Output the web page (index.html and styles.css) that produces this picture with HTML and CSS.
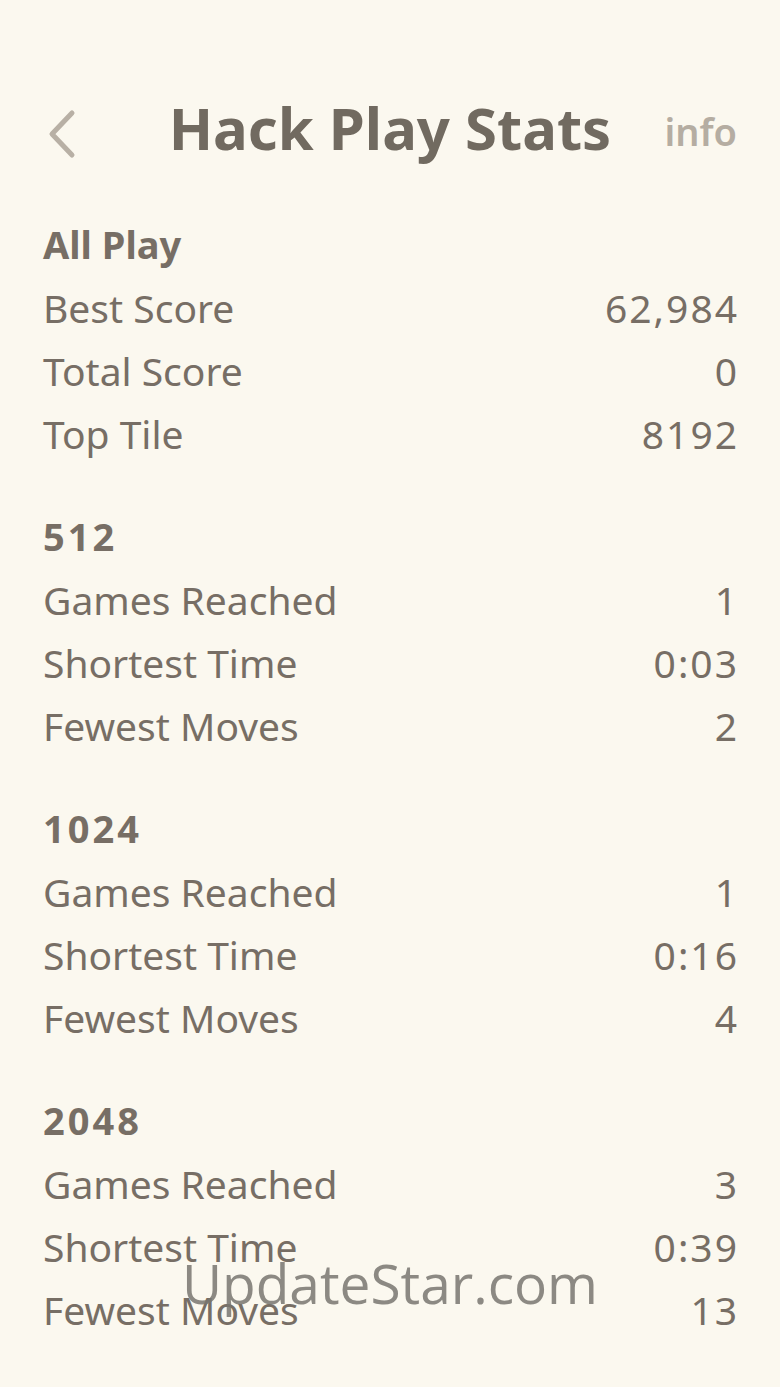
FILE: index.html
```html
<!DOCTYPE html>
<html>
<head>
<meta charset="utf-8">
<link rel="stylesheet" href="styles.css">
</head>
<body>
<div class="page">
  <header class="topbar">
    <div class="back">
      <svg width="40" height="60" viewBox="0 0 40 60"><path d="M29 9 L9 30 L29 51" fill="none" stroke="#b8b0a5" stroke-width="5" stroke-linecap="round" stroke-linejoin="round"/></svg>
    </div>
    <h1 class="title">Hack Play Stats</h1>
    <div class="info">info</div>
  </header>

  <section class="group">
    <div class="head">All Play</div>
    <div class="row"><span>Best Score</span><span class="val">62,984</span></div>
    <div class="row"><span>Total Score</span><span class="val">0</span></div>
    <div class="row"><span>Top Tile</span><span class="val">8192</span></div>
  </section>

  <section class="group">
    <div class="head num">512</div>
    <div class="row"><span>Games Reached</span><span class="val">1</span></div>
    <div class="row"><span>Shortest Time</span><span class="val">0:03</span></div>
    <div class="row"><span>Fewest Moves</span><span class="val">2</span></div>
  </section>

  <section class="group">
    <div class="head num">1024</div>
    <div class="row"><span>Games Reached</span><span class="val">1</span></div>
    <div class="row"><span>Shortest Time</span><span class="val">0:16</span></div>
    <div class="row"><span>Fewest Moves</span><span class="val">4</span></div>
  </section>

  <section class="group">
    <div class="head num">2048</div>
    <div class="row"><span>Games Reached</span><span class="val">3</span></div>
    <div class="row"><span>Shortest Time</span><span class="val">0:39</span></div>
    <div class="row"><span>Fewest Moves</span><span class="val">13</span></div>
  </section>

  <div class="watermark">UpdateStar.com</div>
</div>
</body>
</html>
```

FILE: styles.css
```css
html, body {
  margin: 0;
  padding: 0;
  background: #fbf8ef;
}
.page {
  position: relative;
  width: 780px;
  height: 1387px;
  box-sizing: border-box;
  padding: 84px 43px 0 43px;
  font-family: "Noto Sans", "DejaVu Sans", sans-serif;
  color: #776e65;
}
.topbar {
  display: grid;
  grid-template-columns: 1fr auto 1fr;
  align-items: center;
  height: 82px;
  margin-bottom: 47px;
}
.back {
  display: flex;
  align-items: center;
  margin-top: 12px;
}
.back svg {
  display: block;
}
.title {
  margin: 0;
  font-size: 58px;
  line-height: 82px;
  font-weight: 700;
  color: #716a60;
  white-space: nowrap;
}
.info {
  justify-self: end;
  font-size: 38px;
  font-weight: 600;
  color: #b5ada2;
  line-height: 82px;
  margin-top: 6px;
}
.group {
  margin-bottom: 40px;
}
.head {
  font-size: 38px;
  font-weight: 700;
  line-height: 63px;
}
.head.num {
  letter-spacing: 3px;
}
.row {
  display: flex;
  justify-content: space-between;
  font-size: 39px;
  line-height: 63px;
}
.val {
  letter-spacing: 2px;
  margin-right: -2px;
}
.watermark {
  position: absolute;
  left: 0;
  right: 0;
  top: 1245px;
  text-align: center;
  font-family: "Open Sans", "Noto Sans", sans-serif;
  font-size: 55px;
  line-height: 75px;
  color: rgba(120, 118, 112, 0.85);
}
```
